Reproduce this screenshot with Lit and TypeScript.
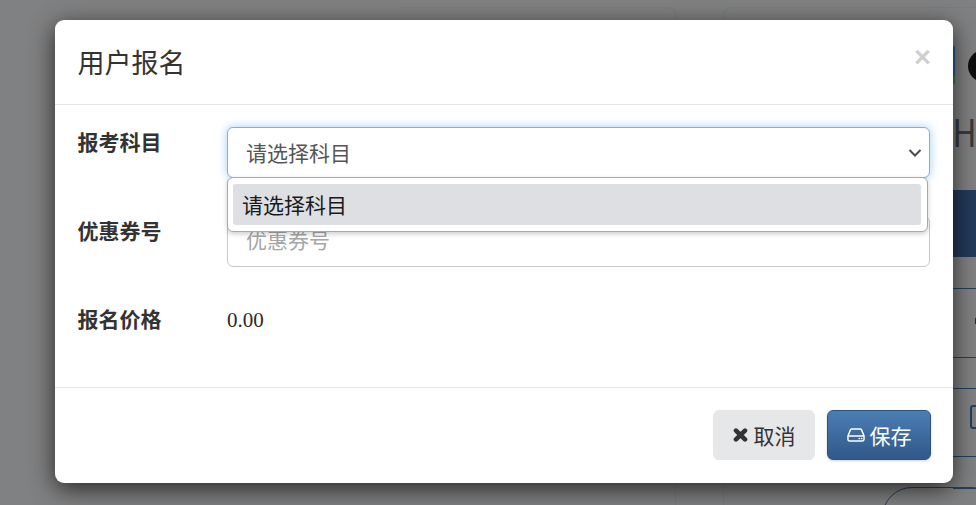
import { LitElement, html, css } from "lit";
import { customElement } from "lit/decorators.js";

@customElement("app-root")
export class AppRoot extends LitElement {
  static styles = css`
    :host {
      display: block;
      position: relative;
      width: 976px;
      height: 505px;
      overflow: hidden;
      background: #808182;
      font-family: "Noto Sans CJK SC", "Liberation Sans", sans-serif;
      font-size: 21px;
      color: #333;
    }
    * { box-sizing: border-box; }
    .bg { position: absolute; display: block; }
    .card-a { left: 400px; top: 7px; width: 276px; height: 520px; border: 1px solid #7a7b7c; border-left: 0; border-radius: 0 8px 8px 0; }
    .card-b { left: 723px; top: 7px; width: 300px; height: 520px; border: 1px solid #7a7b7c; border-radius: 8px; }
    .sliver-blue { left: 953px; top: 46px; width: 2px; height: 30px; background: #2d5c9c; }
    .sliver-green { left: 953px; top: 76px; width: 2px; height: 8px; background: #3e7a45; }
    .logo { left: 968px; top: 50px; width: 32px; height: 32px; border-radius: 50%; background: #0f0f0f; }
    .heading { left: 953px; top: 108px; font: 38px/52px Roboto, sans-serif; color: #3a3a3a; transform: scaleX(0.85); transform-origin: left center; }
    .block { left: 953px; top: 190px; width: 30px; height: 67px; background: #233a5b; }
    .rule { left: 953px; width: 30px; height: 1px; background: #24405f; }
    .r1 { top: 288px; } .r2 { top: 357px; } .r3 { top: 388px; } .r4 { top: 456px; } .r5 { top: 488px; }
    .mark { left: 975px; top: 318px; width: 3px; height: 6px; background: #2b2b2b; }
    .box { left: 970px; top: 405px; width: 20px; height: 24px; border: 2px solid #24405f; border-radius: 3px; }
    .pill { left: 882px; top: 487px; width: 120px; height: 60px; border: 1px solid #24405f; border-radius: 38px; }

    .overlay { position: relative; padding: 20px 23px 0 55px; }
    .modal {
      width: 898px;
      height: 463px;
      background: #fff;
      border-radius: 9px;
      box-shadow: 0 6px 24px rgba(0, 0, 0, 0.7);
      display: flex;
      flex-direction: column;
      position: relative;
    }
    .header {
      height: 85px;
      border-bottom: 1px solid #e4e5e7;
      padding: 0 23px 0 22.5px;
      display: flex;
      align-items: center;
      justify-content: space-between;
    }
    .title { font-size: 27px; font-weight: 400; margin: 0; color: #333; line-height: 86px; }
    .close {
      font: 700 29px/29px "Liberation Sans", sans-serif;
      color: #cfcfcf;
      margin: -9px -1px 0 0;
      padding: 0;
      border: 0;
      background: none;
    }
    .body {
      flex: 1;
      padding: 22px 23px 0 22.5px;
      display: grid;
      grid-template-columns: 149.5px 703px;
      grid-auto-rows: 51px;
      row-gap: 38px;
    }
    .label { font-weight: 700; line-height: 28px; color: #333; }
    .label.last { line-height: 26px; }
    .control {
      display: block;
      height: 51px;
      border: 1px solid #c8c9cc;
      border-radius: 6px;
      padding: 0 18px;
      font: inherit;
      line-height: 49px;
      color: #555;
      width: 100%;
      outline: none;
      background: #fff;
    }
    input.control { padding-bottom: 5px; line-height: normal; }
    .control::placeholder { color: #a4a6a8; opacity: 1; }
    .select {
      display: flex;
      align-items: center;
      justify-content: space-between;
      padding-right: 7px;
      border-color: #7fafdf;
      box-shadow: 0 0 10px rgba(102, 175, 233, 0.6);
    }
    .select svg { display: block; width: 14px; height: 10px; margin-top: 1px; }
    .field { position: relative; }
    .menu {
      position: absolute;
      left: 0;
      top: 50px;
      width: 701px;
      height: 55px;
      background: #fff;
      border: 1px solid #a8a9aa;
      border-radius: 6px;
      box-shadow: 0 2px 5px rgba(0, 0, 0, 0.2);
      padding: 6px 6px 5px 5px;
      z-index: 2;
    }
    .option {
      height: 41px;
      background: #dedfe2;
      border-radius: 3px;
      padding-left: 9px;
      line-height: 41px;
      color: #1a1a1a;
    }
    .price { font-family: "Liberation Serif", serif; line-height: 30px; color: #2a2a2a; }
    .footer {
      height: 96px;
      border-top: 1px solid #e4e5e7;
      padding: 22px 22px 0 0;
      display: flex;
      justify-content: flex-end;
      align-items: flex-start;
      gap: 12px;
    }
    .btn {
      height: 50px;
      border-radius: 6px;
      font: inherit;
      display: flex;
      align-items: center;
      justify-content: center;
      gap: 5px;
      padding: 0 0 1px;
    }
    .cancel { width: 102px; background: #e6e7e9; border: 1px solid #e6e7e9; color: #333; gap: 6px; }
    .cancel svg { width: 15px; height: 14px; display: block; }
    .save {
      width: 104px;
      background: linear-gradient(#4a7eb5, #315888);
      border: 1px solid #2d5380;
      color: #fff;
      box-shadow: 0 1px 3px rgba(0, 0, 0, 0.18);
    }
    .save svg { width: 18px; height: 16px; display: block; }
  `;

  render() {
    return html`
      <div class="bg card-a"></div>
      <div class="bg card-b"></div>
      <div class="bg sliver-blue"></div>
      <div class="bg sliver-green"></div>
      <div class="bg logo"></div>
      <div class="bg heading">H</div>
      <div class="bg block"></div>
      <div class="bg rule r1"></div>
      <div class="bg rule r2"></div>
      <div class="bg rule r3"></div>
      <div class="bg rule r4"></div>
      <div class="bg rule r5"></div>
      <div class="bg mark"></div>
      <div class="bg box"></div>
      <div class="bg pill"></div>

      <div class="overlay">
        <div class="modal">
          <div class="header">
            <h4 class="title">用户报名</h4>
            <button class="close">×</button>
          </div>
          <div class="body">
            <div class="label">报考科目</div>
            <div class="field">
              <div class="control select">
                <span>请选择科目</span>
                <svg viewBox="0 0 14 10" fill="none" stroke="#4a4a4a" stroke-width="2">
                  <path d="M1.5 2 L7 7.5 L12.5 2"></path>
                </svg>
              </div>
              <div class="menu"><div class="option">请选择科目</div></div>
            </div>
            <div class="label">优惠券号</div>
            <div class="field">
              <input class="control" placeholder="优惠券号" />
            </div>
            <div class="label last">报名价格</div>
            <div class="price">0.00</div>
          </div>
          <div class="footer">
            <button class="btn cancel">
              <svg viewBox="0 0 15 14" fill="none" stroke="#333" stroke-width="4.6" stroke-linecap="round">
                <path d="M3 2.6 L12 11.4 M12 2.6 L3 11.4"></path>
              </svg>
              <span>取消</span>
            </button>
            <button class="btn save">
              <svg viewBox="0 0 19 16" fill="none" stroke="#fff" stroke-width="1.5">
                <path d="M1 9 L3.6 2.6 Q4 1.7 5 1.7 H14 Q15 1.7 15.4 2.6 L18 9 V12.6 Q18 14.3 16.3 14.3 H2.7 Q1 14.3 1 12.6 Z M1 9 H18"></path>
                <circle cx="13" cy="11.7" r="0.9" fill="#fff" stroke="none"></circle>
                <circle cx="15.5" cy="11.7" r="0.9" fill="#fff" stroke="none"></circle>
              </svg>
              <span>保存</span>
            </button>
          </div>
        </div>
      </div>
    `;
  }
}
